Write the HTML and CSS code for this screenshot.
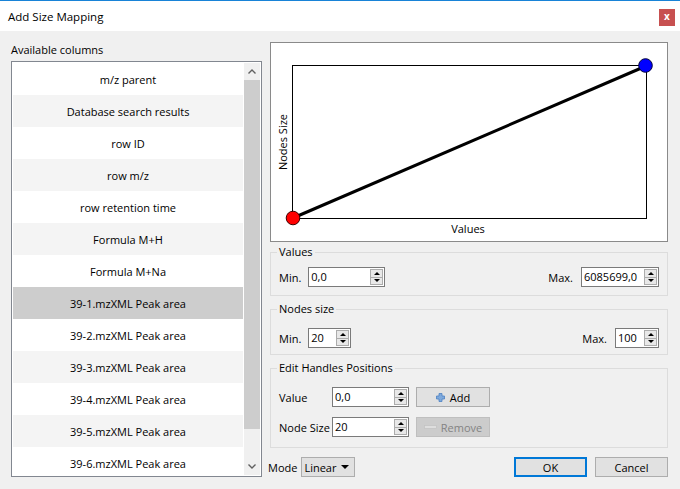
FILE: index.html
```html
<!DOCTYPE html>
<html>
<head>
<meta charset="utf-8">
<link rel="stylesheet" href="styles.css">
</head>
<body>
<div class="titlebar">
  <span class="title">Add Size Mapping</span>
  <span class="close">x</span>
</div>
<div class="content">
  <div class="left">
    <div class="label">Available columns</div>
    <div class="listbox">
      <div class="items">
        <div class="item">m/z parent</div>
        <div class="item alt">Database search results</div>
        <div class="item">row ID</div>
        <div class="item alt">row m/z</div>
        <div class="item">row retention time</div>
        <div class="item alt">Formula M+H</div>
        <div class="item">Formula M+Na</div>
        <div class="item sel">39-1.mzXML Peak area</div>
        <div class="item">39-2.mzXML Peak area</div>
        <div class="item alt">39-3.mzXML Peak area</div>
        <div class="item">39-4.mzXML Peak area</div>
        <div class="item alt">39-5.mzXML Peak area</div>
        <div class="item">39-6.mzXML Peak area</div>
      </div>
      <div class="scrollbar">
        <div class="sb-btn"><svg width="8" height="5" viewBox="0 0 8 5"><path d="M0.5 4.5 L4 1 L7.5 4.5" fill="none" stroke="#606060" stroke-width="1.4"/></svg></div>
        <div class="sb-track"><div class="sb-thumb"></div></div>
        <div class="sb-btn"><svg width="8" height="5" viewBox="0 0 8 5"><path d="M0.5 0.5 L4 4 L7.5 0.5" fill="none" stroke="#606060" stroke-width="1.4"/></svg></div>
      </div>
    </div>
  </div>
  <div class="right">
    <div class="chart">
      <svg width="396" height="198" viewBox="0 0 396 198">
        <rect x="21.5" y="22.5" width="354" height="153" fill="none" stroke="#000" stroke-width="1"/>
        <line x1="22" y1="175" x2="375" y2="23" stroke="#000" stroke-width="3"/>
        <circle cx="22" cy="175" r="6.8" fill="#ff0000" stroke="#3a0000" stroke-width="1"/>
        <circle cx="374.5" cy="22.5" r="6.8" fill="#0000ff" stroke="#00003a" stroke-width="1"/>
        <text x="197" y="190" class="axis" text-anchor="middle">Values</text>
        <text x="16" y="99" class="axis" text-anchor="middle" transform="rotate(-90 16 99)">Nodes Size</text>
      </svg>
    </div>

    <div class="group g-values">
      <span class="legend">Values</span>
      <div class="row between">
        <div class="field"><span class="lbl">Min.</span>
          <div class="spin w77"><span class="val">0,0</span><span class="arrows"><span class="arr"><i class="tri-up"></i></span><span class="arr"><i class="tri-down"></i></span></span></div>
        </div>
        <div class="field"><span class="lbl lbl-max">Max.</span>
          <div class="spin w78"><span class="val">6085699,0</span><span class="arrows"><span class="arr"><i class="tri-up"></i></span><span class="arr"><i class="tri-down"></i></span></span></div>
        </div>
      </div>
    </div>

    <div class="group g-nodes">
      <span class="legend">Nodes size</span>
      <div class="row between">
        <div class="field"><span class="lbl">Min.</span>
          <div class="spin w43"><span class="val">20</span><span class="arrows"><span class="arr"><i class="tri-up"></i></span><span class="arr"><i class="tri-down"></i></span></span></div>
        </div>
        <div class="field"><span class="lbl lbl-max">Max.</span>
          <div class="spin w44"><span class="val">100</span><span class="arrows"><span class="arr"><i class="tri-up"></i></span><span class="arr"><i class="tri-down"></i></span></span></div>
        </div>
      </div>
    </div>

    <div class="group g-edit">
      <span class="legend">Edit Handles Positions</span>
      <div class="erow">
        <span class="elbl">Value</span>
        <div class="spin w77"><span class="val">0,0</span><span class="arrows"><span class="arr"><i class="tri-up"></i></span><span class="arr"><i class="tri-down"></i></span></span></div>
        <div class="btn btn-icon">
          <svg width="9" height="9" viewBox="0 0 9 9"><path d="M3 0.5 H6 V3 H8.5 V6 H6 V8.5 H3 V6 H0.5 V3 H3 Z" fill="#7ea9dc" stroke="#4d82c3" stroke-width="0.8"/></svg>
          <span>Add</span>
        </div>
      </div>
      <div class="erow">
        <span class="elbl">Node Size</span>
        <div class="spin w77"><span class="val">20</span><span class="arrows"><span class="arr"><i class="tri-up"></i></span><span class="arr"><i class="tri-down"></i></span></span></div>
        <div class="btn btn-icon disabled">
          <svg width="13" height="4" viewBox="0 0 13 4"><rect x="0.5" y="0.5" width="12" height="3" fill="#dedede" stroke="#c4c4c4" stroke-width="0.8"/></svg>
          <span>Remove</span>
        </div>
      </div>
    </div>

    <div class="bottom">
      <span class="mode">Mode</span>
      <div class="combo"><span>Linear</span><i class="combo-tri"></i></div>
      <div class="spacer"></div>
      <div class="btn btn-ok">OK</div>
      <div class="btn btn-cancel">Cancel</div>
    </div>
  </div>
</div>
</body>
</html>
```

FILE: styles.css
```css
* { box-sizing: border-box; }
body {
  margin: 0;
  width: 680px;
  height: 489px;
  overflow: hidden;
  background: #f0f0f0;
  font-family: "Open Sans", "Noto Sans", sans-serif;
  font-size: 11px;
  color: #000;
}
.titlebar {
  height: 31px;
  border-top: 1px solid #1883d7;
  background: #fff;
  display: flex;
  align-items: center;
  justify-content: space-between;
  padding: 0 5px 0 8px;
}
.title { font-size: 11.5px; }
.close {
  width: 16px;
  height: 17px;
  background: #c75050;
  color: #fff;
  font-weight: bold;
  font-size: 10px;
  line-height: 15px;
  display: flex;
  justify-content: center;
  margin-top: 2px;
}
.content {
  display: flex;
  gap: 8px;
  padding: 11px 12px 0 11px;
}
.left { width: 251px; }
.label { line-height: 13px; margin-bottom: 5px; padding-top: 1px; }
.listbox {
  height: 416px;
  border: 1px solid #828790;
  background: #fff;
  padding: 1px;
  display: flex;
  overflow: hidden;
}
.items { flex: 1; overflow: hidden; }
.item {
  height: 32px;
  line-height: 34px;
  text-align: center;
  white-space: nowrap;
  overflow: hidden;
}
.item.alt { background: #f4f4f4; }
.item.sel { background: #cdcdcd; }
.scrollbar {
  width: 16px;
  margin-left: 1px;
  background: #f0f0f0;
  display: flex;
  flex-direction: column;
}
.sb-btn {
  height: 17px;
  display: flex;
  align-items: center;
  justify-content: center;
}
.sb-track { flex: 1; padding: 0 0 30px 0; }
.sb-thumb { height: 349px; background: #cdcdcd; }

.right { width: 398px; }
.chart {
  height: 200px;
  border: 1px solid #8a8a8a;
  background: #fff;
}
.chart svg { display: block; }
.axis { font-family: "Open Sans", "Noto Sans", sans-serif; font-size: 11px; fill: #000; }

.group {
  position: relative;
  border: 1px solid #dcdcdc;
  padding: 0 8px;
}
.legend {
  position: absolute;
  top: -9px;
  left: 6px;
  padding: 0 2px;
  line-height: 16px;
  background: #f0f0f0;
}
.g-values { margin-top: 10px; height: 44px; padding-top: 14px; }
.g-nodes { margin-top: 13px; height: 46px; padding-top: 18px; }
.g-edit { margin-top: 13px; height: 80px; padding-top: 18px; padding-left: 7px; }

.row { display: flex; align-items: center; }
.between { justify-content: space-between; }
.field { display: flex; align-items: center; }
.lbl { margin-right: 7px; }
.lbl-max { margin-right: 8px; }

.spin {
  height: 20px;
  border: 1px solid #7a7a7a;
  background: #fff;
  display: flex;
  align-items: stretch;
}
.w77 { width: 77px; }
.w78 { width: 78px; }
.w43 { width: 43px; }
.w44 { width: 44px; }
.val { flex: 1; padding-left: 2px; line-height: 18px; white-space: nowrap; overflow: hidden; }
.arrows {
  width: 13px;
  margin: 1px 1px 1px 0;
  display: flex;
  flex-direction: column;
  border: 1px solid #acacac;
}
.arr {
  flex: 1;
  background: #e8e8e8;
  display: flex;
  align-items: center;
  justify-content: center;
}
.arr + .arr { border-top: 1px solid #acacac; }
.tri-up {
  width: 0; height: 0;
  border-left: 3px solid transparent;
  border-right: 3px solid transparent;
  border-bottom: 3px solid #000;
}
.tri-down {
  width: 0; height: 0;
  border-left: 3px solid transparent;
  border-right: 3px solid transparent;
  border-top: 3px solid #000;
}

.erow { display: flex; align-items: center; height: 20px; }
.erow + .erow { margin-top: 10px; }
.elbl { width: 54px; padding-left: 1px; }
.btn {
  height: 20px;
  border: 1px solid #adadad;
  background: #e1e1e1;
  display: flex;
  align-items: center;
  justify-content: center;
}
.btn-icon { width: 74px; margin-left: 7px; gap: 5px; }
.btn-icon.disabled {
  background: #cccccc;
  border-color: #bfbfbf;
  color: #838383;
  gap: 4px;
}

.bottom {
  margin-top: 9px;
  height: 20px;
  display: flex;
  align-items: center;
}
.mode { margin-left: -2px; margin-right: 4px; }
.combo {
  width: 54px;
  height: 20px;
  border: 1px solid #adadad;
  background: #e1e1e1;
  display: flex;
  align-items: center;
  justify-content: space-between;
  padding: 0 5px 0 2px;
}
.combo-tri {
  width: 0; height: 0;
  border-left: 4px solid transparent;
  border-right: 4px solid transparent;
  border-top: 4px solid #000;
}
.spacer { flex: 1; }
.btn-ok { width: 73px; border: 2px solid #0078d7; }
.btn-cancel { width: 73px; margin-left: 8px; }
```
